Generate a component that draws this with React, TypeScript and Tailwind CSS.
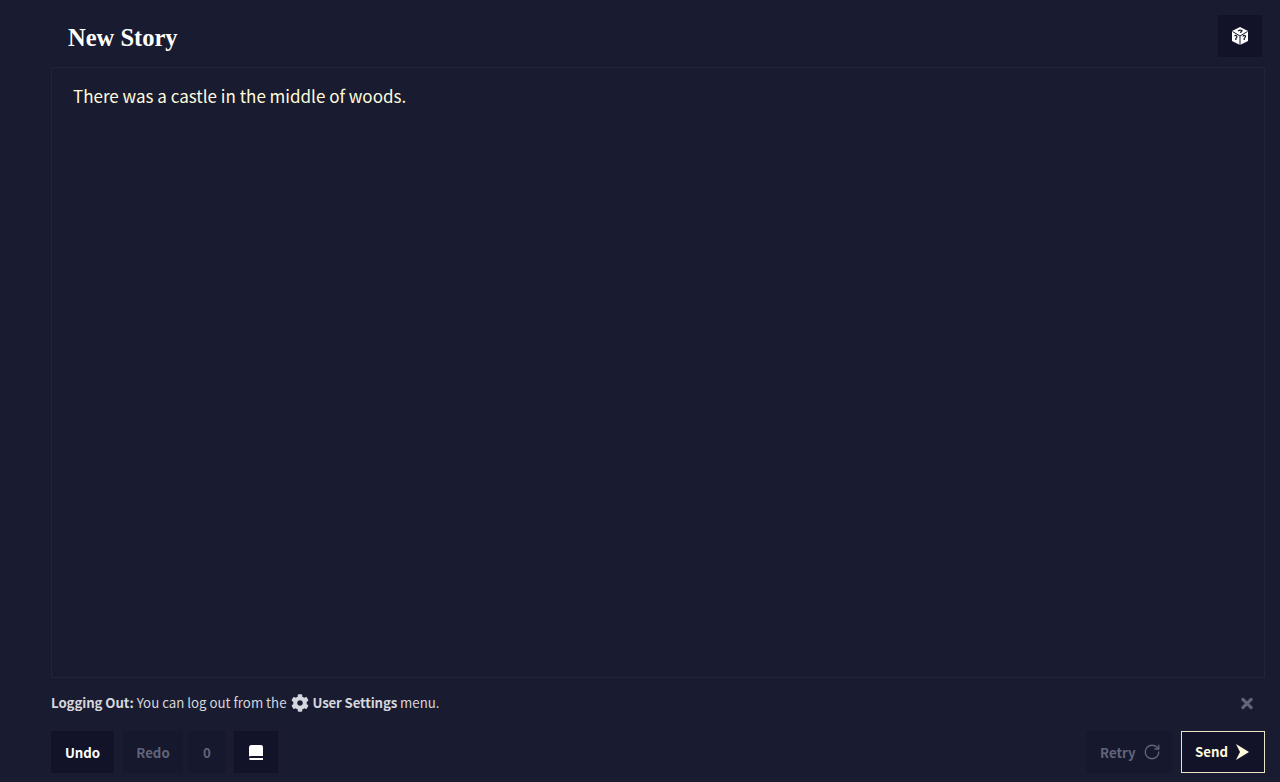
import React from 'react';
import { RotateCw } from 'lucide-react';
import { FaCog, FaTimes } from 'react-icons/fa';

const DiceIcon = () => (
  <svg viewBox="0 0 20 20" className="w-[20px] h-[20px]">
    <path d="M10 1 L18 5 V15 L10 19 L2 15 V5 Z" fill="#fff" />
    <path d="M10 10 L2.5 5.5 M10 10 L17.5 5.5 M10 10 V19" stroke="#12132a" strokeWidth="1" fill="none" />
    <path d="M8 5 Q10 3.5 12 4.5 Q12 6 10 6.5" stroke="#12132a" strokeWidth="1.2" fill="none" />
    <path d="M4.5 10 Q6 8.5 7 10.5 Q6.8 12 5.8 12.5 V14" stroke="#12132a" strokeWidth="1.2" fill="none" />
    <path d="M12.8 10.5 Q14 8.5 15.5 10 Q15.4 11.8 14.2 12.5 V14" stroke="#12132a" strokeWidth="1.2" fill="none" />
  </svg>
);

const BookIcon = () => (
  <svg viewBox="0 0 14 15" className="w-[14px] h-[15px]">
    <path d="M2.5 0 H12 Q14 0 14 2 V11 H2 Q0.8 11 0 11.5 V2.5 Q0 0 2.5 0 Z" fill="#fff" />
    <path d="M1.2 13 H14 V15 H2 Q0 15 0 14 Q0 13 1.2 13 Z" fill="#fff" />
  </svg>
);

const SendIcon = () => (
  <svg viewBox="0 0 13 16" className="w-[13px] h-[16px]">
    <path d="M0 0 L13 8 L0 16 L4 8 Z" fill="#fffbdc" />
  </svg>
);

export default function App() {
  return (
    <div className="h-[782px] w-[1280px] overflow-hidden bg-[#191c30] flex flex-col pl-[51px] pr-[15px] font-['Noto_Sans_CJK_JP','Noto_Sans',sans-serif]">
      {/* Header */}
      <div className="h-[67px] pt-[4px] flex items-center justify-between shrink-0">
        <h1 className="pl-[17px] mt-[5px] text-[24.5px] font-bold text-white font-['Liberation_Serif',serif]">New Story</h1>
        <button className="w-[44px] h-[42px] mr-[3px] bg-[#121329] flex items-center justify-center">
          <DiceIcon />
        </button>
      </div>

      {/* Story */}
      <div className="h-[611px] shrink-0 border border-[#222539] px-[21px] py-[14px]">
        <p className="text-[17px] leading-[27px] text-[#fffbdc]">There was a castle in the middle of woods.</p>
      </div>

      {/* Tip */}
      <div className="h-[52px] pb-[2px] shrink-0 flex items-center justify-between text-[13.25px] text-[#d5d6de]">
        <p className="flex items-center">
          <span className="font-bold tracking-[-0.08px]">Logging Out:</span>
          <span className="ml-[3px]">You can log out from the</span>
          <FaCog className="w-[18px] h-[18px] mx-[4px]" />
          <span className="font-bold tracking-[-0.15px]">User Settings</span>
          <span className="ml-[3px]">menu.</span>
        </p>
        <FaTimes className="w-[12px] h-[17px] mr-[12px] text-[#62647a]" />
      </div>

      {/* Actions */}
      <div className="h-[42px] mt-[1px] shrink-0 flex items-center justify-between text-[13.25px] font-bold">
        <div className="flex items-center">
          <button className="h-[42px] w-[63px] pt-[1px] bg-[#121329] text-white">Undo</button>
          <button className="h-[42px] w-[60px] pt-[1px] ml-[9px] bg-[#16182d] text-[#62647a]">Redo</button>
          <button className="h-[42px] w-[38px] pt-[1px] ml-[5px] bg-[#16182d] text-[#62647a]">0</button>
          <button className="h-[42px] w-[44px] ml-[8px] bg-[#121329] flex items-center justify-center"><BookIcon /></button>
        </div>
        <div className="flex items-center">
          <button className="h-[42px] w-[86px] pt-[1px] pl-[14px] bg-[#16182d] text-[#62647a] flex items-center gap-[7px]">
            Retry <RotateCw className="w-[18px] h-[18px] -mt-[1px]" strokeWidth={1.75} />
          </button>
          <button className="h-[42px] w-[84px] ml-[9px] pl-[13px] bg-[#121329] border border-[#e8e5c8] text-[#fffbdc] flex items-center gap-[8px]">
            Send <SendIcon />
          </button>
        </div>
      </div>
    </div>
  );
}
